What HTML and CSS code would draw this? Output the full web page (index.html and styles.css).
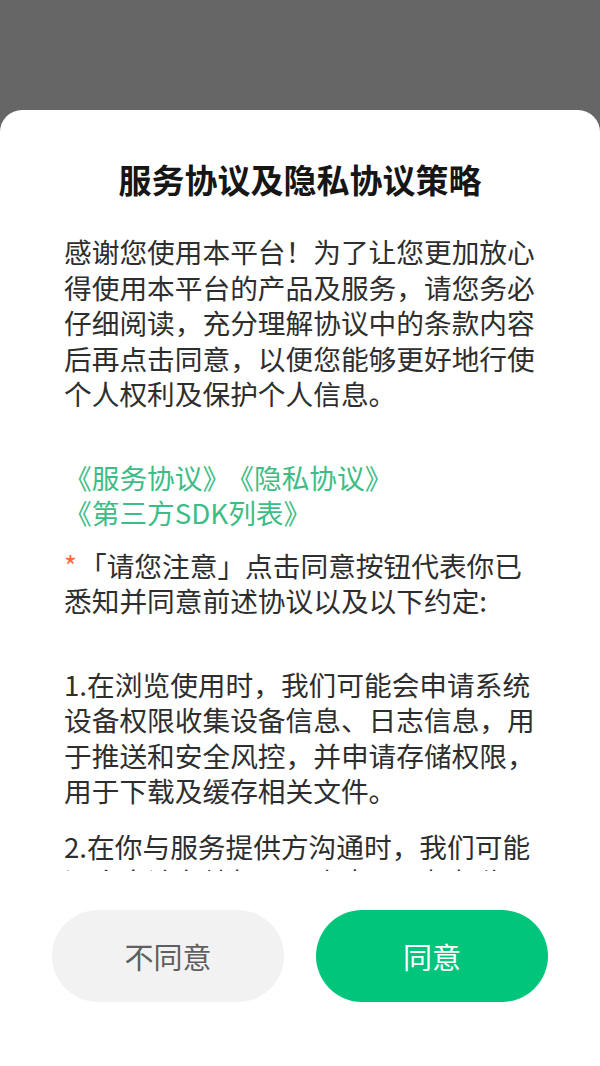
FILE: index.html
```html
<!DOCTYPE html>
<html lang="zh-CN">
<head>
<meta charset="utf-8">
<title>服务协议及隐私协议策略</title>
<link rel="stylesheet" href="styles.css">
</head>
<body>
<div class="overlay">
  <div class="sheet">
    <h1 class="title">服务协议及隐私协议策略</h1>
    <div class="content">
      <p class="para intro">感谢您使用本平台！为了让您更加放心得使用本平台的产品及服务，请您务必仔细阅读，充分理解协议中的条款内容后再点击同意，以便您能够更好地行使个人权利及保护个人信息。</p>
      <p class="para links"><a class="link">《服务协议》</a><a class="link link-next">《隐私协议》</a><br><a class="link">《第三方SDK列表》</a></p>
      <p class="para notice"><span class="star">*</span>「请您注意」点击同意按钮代表你已悉知并同意前述协议以及以下约定:</p>
      <p class="para item item-first">1.在浏览使用时，我们可能会申请系统设备权限收集设备信息、日志信息，用于推送和安全风控，并申请存储权限，用于下载及缓存相关文件。</p>
      <p class="para item">2.在你与服务提供方沟通时，我们可能还会申请存储权限、麦克风及相机(摄像头)权限，用于发送语音、图片及视频等信息。</p>
    </div>
    <div class="actions">
      <button class="btn btn-decline">不同意</button>
      <button class="btn btn-agree">同意</button>
    </div>
  </div>
</div>
</body>
</html>
```

FILE: styles.css
```css
* { box-sizing: border-box; }
html, body {
  margin: 0;
  padding: 0;
  height: 100%;
}
body {
  background: #666666;
  font-family: "Noto Sans CJK SC", "Noto Sans", sans-serif;
}
.overlay {
  height: 1066px;
  display: flex;
  flex-direction: column;
  justify-content: flex-end;
}
.sheet {
  height: 956px;
  background: #ffffff;
  border-radius: 22px 22px 0 0;
  display: flex;
  flex-direction: column;
}
.title {
  margin: 0;
  padding-top: 49px;
  font-size: 33px;
  line-height: 40px;
  font-weight: 700;
  color: #161616;
  text-align: center;
}
.content {
  margin: 35px 64px 0 64px;
  height: 637px;
  overflow: hidden;
  font-size: 27.7px;
  line-height: 35.5px;
  color: #2e2e2e;
}
.para {
  margin: 0;
}
.intro { margin-bottom: 48px; }
.links { margin-bottom: 17px; }
.notice { margin-bottom: 48px; }
.item-first { margin-bottom: 20px; }
.link {
  color: #3dbd86;
  text-decoration: none;
}
.link-next {
  margin-left: 10px;
}
.star {
  color: #ff6a3a;
  margin-right: 2px;
}
.actions {
  margin-top: 39px;
  padding: 0 52px;
  display: flex;
  justify-content: space-between;
}
.btn {
  width: 232px;
  height: 92px;
  border: none;
  border-radius: 46px;
  font-family: "Noto Sans CJK SC", "Noto Sans", sans-serif;
  font-size: 29px;
  padding: 0;
}
.btn-decline {
  background: #f2f2f2;
  color: #5f5f5f;
}
.btn-agree {
  background: #00c57a;
  color: #ffffff;
}
```
